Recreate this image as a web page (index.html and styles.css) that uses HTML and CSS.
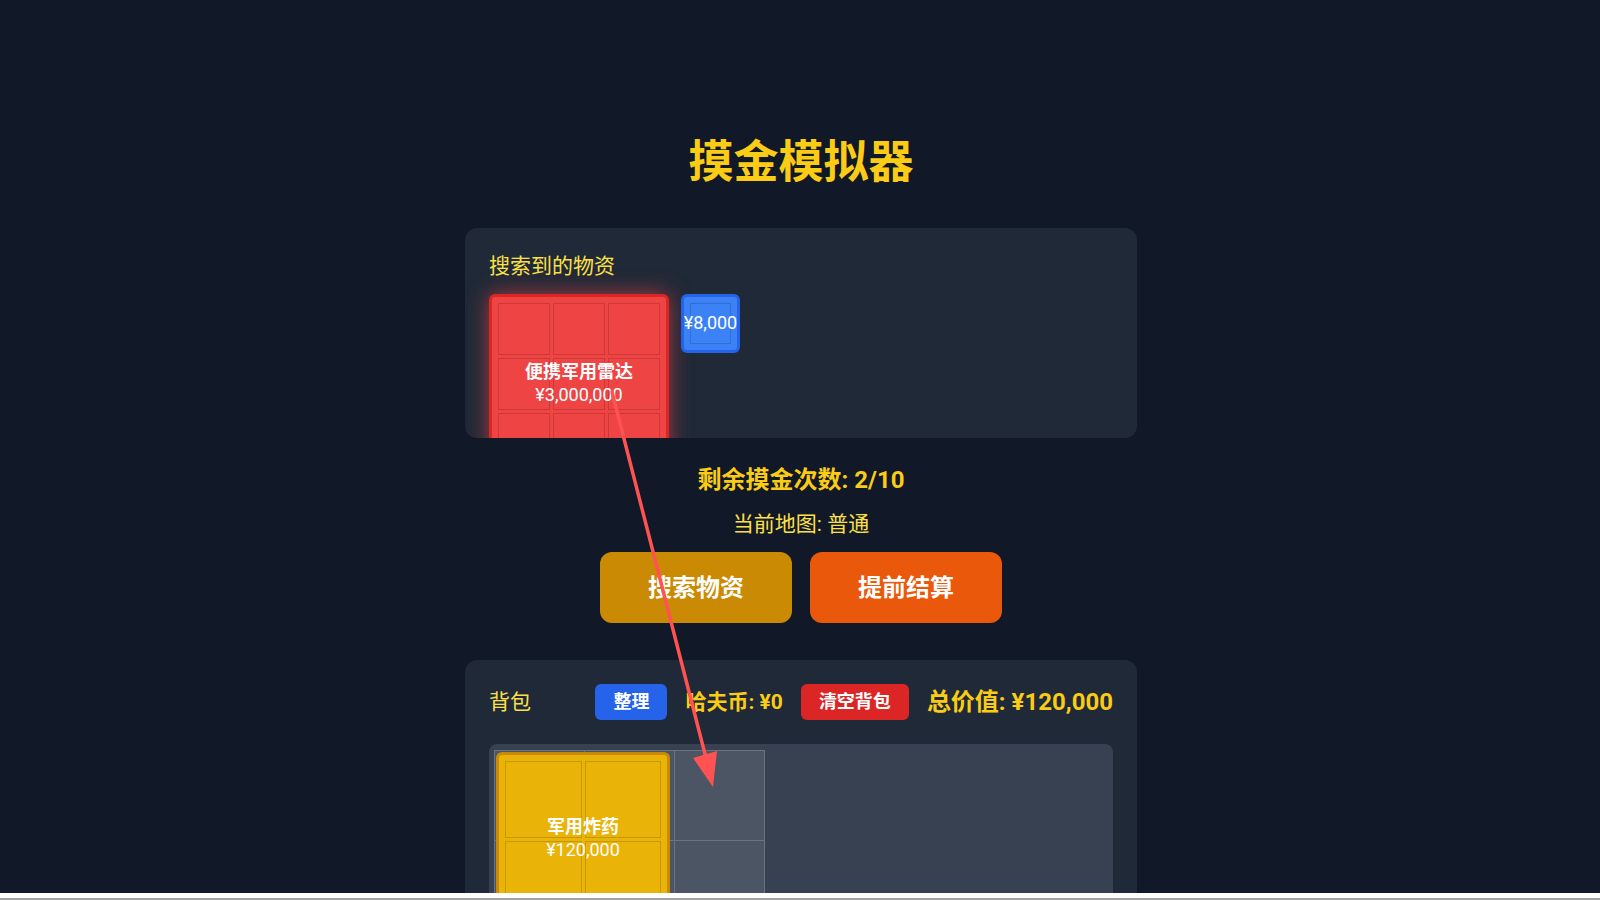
FILE: index.html
```html
<!DOCTYPE html>
<html lang="zh-CN">
<head>
<meta charset="utf-8">
<title>摸金模拟器</title>
<link rel="stylesheet" href="styles.css">
</head>
<body>
<main class="page">
  <h1 class="title">摸金模拟器</h1>

  <section class="panel search-panel">
    <h2 class="panel-label">搜索到的物资</h2>
    <div class="found-items">
      <div class="item item-red glow" style="width:180px;height:180px">
        <div class="cells cols-3">
          <span class="cell"></span><span class="cell"></span><span class="cell"></span>
          <span class="cell"></span><span class="cell"></span><span class="cell"></span>
          <span class="cell"></span><span class="cell"></span><span class="cell"></span>
        </div>
        <div class="item-info">
          <div class="item-name">便携军用雷达</div>
          <div class="item-price">¥3,000,000</div>
        </div>
      </div>
      <div class="item item-blue" style="width:59px;height:59px">
        <div class="cells cols-1">
          <span class="cell"></span>
        </div>
        <div class="item-info">
          <div class="item-price">¥8,000</div>
        </div>
      </div>
    </div>
  </section>

  <p class="counter">剩余摸金次数: 2/10</p>
  <p class="map">当前地图: 普通</p>

  <div class="actions">
    <button class="btn btn-search">搜索物资</button>
    <button class="btn btn-settle">提前结算</button>
  </div>

  <section class="panel bag-panel">
    <div class="bag-header">
      <h2 class="panel-label">背包</h2>
      <div class="bag-tools">
        <button class="chip chip-blue">整理</button>
        <span class="coins">哈夫币: ¥0</span>
        <button class="chip chip-red">清空背包</button>
        <span class="total">总价值: ¥120,000</span>
      </div>
    </div>
    <div class="bag-area">
      <div class="bag-grid">
        <span class="bag-cell"></span><span class="bag-cell"></span><span class="bag-cell"></span>
        <span class="bag-cell"></span><span class="bag-cell"></span><span class="bag-cell"></span>
        <span class="bag-cell"></span><span class="bag-cell"></span><span class="bag-cell"></span>
        <span class="bag-cell"></span><span class="bag-cell"></span><span class="bag-cell"></span>
        <div class="item item-yellow bag-item" style="left:2px;top:2px;width:174px;height:174px">
          <div class="cells cols-2">
            <span class="cell"></span><span class="cell"></span>
            <span class="cell"></span><span class="cell"></span>
          </div>
          <div class="item-info">
            <div class="item-name">军用炸药</div>
            <div class="item-price">¥120,000</div>
          </div>
        </div>
      </div>
    </div>
  </section>
</main>

<svg class="annotation" viewBox="0 0 1600 900" xmlns="http://www.w3.org/2000/svg">
  <line x1="612" y1="392" x2="706" y2="758" stroke="#ff5252" stroke-width="3.5" stroke-linecap="round"/>
  <polygon points="693,758 717,751 713,787" fill="#ff5252"/>
</svg>
<div class="window-edge"></div>
</body>
</html>
```

FILE: styles.css
```css
* {
  box-sizing: border-box;
}

html {
  overflow: hidden;
}

body {
  margin: 0;
  padding-left: 2px;
  min-height: 900px;
  background: #111827;
  color: #fff;
  font-family: Roboto, "Noto Sans CJK SC", sans-serif;
}

.page {
  width: 672px;
  margin: 0 auto;
  padding-top: 136px;
}

.title {
  margin: 0 0 38px;
  font-size: 45px;
  line-height: 54px;
  font-weight: 700;
  color: #facc15;
  text-align: center;
}

.panel {
  background: #1f2937;
  border-radius: 12px;
}

.search-panel {
  height: 210px;
  overflow: hidden;
  padding: 24px;
}

.panel-label {
  margin: 0;
  font-size: 21px;
  line-height: 28px;
  font-weight: 400;
  color: #fde047;
}

.search-panel .panel-label {
  margin-bottom: 14px;
}

.found-items {
  display: flex;
  align-items: flex-start;
  gap: 12px;
}

.item {
  position: relative;
  flex: none;
  border: 3px solid;
  border-radius: 6px;
  padding: 6px;
}

.cells {
  display: grid;
  gap: 3px;
  height: 100%;
  grid-auto-rows: 1fr;
}

.cols-1 { grid-template-columns: 1fr; }
.cols-2 { grid-template-columns: repeat(2, 1fr); }
.cols-3 { grid-template-columns: repeat(3, 1fr); }

.cell {
  border: 1px solid rgba(0, 0, 0, 0.15);
}

.item-info {
  position: absolute;
  inset: 0;
  padding-bottom: 3px;
  display: flex;
  flex-direction: column;
  align-items: center;
  justify-content: center;
  font-size: 18px;
  line-height: 23px;
  color: #fff;
  text-align: center;
  white-space: nowrap;
}

.item-name {
  font-weight: 700;
}

.item-red {
  background: #ef4444;
  border-color: #dc2626;
}

.glow {
  box-shadow: 0 0 22px rgba(239, 68, 68, 0.65);
}

.item-blue {
  background: #3b82f6;
  border-color: #2563eb;
}

.item-yellow {
  background: #eab308;
  border-color: #ca8a04;
}

.counter {
  margin: 26px 0 0;
  text-align: center;
  font-size: 24px;
  line-height: 32px;
  font-weight: 700;
  color: #facc15;
}

.map {
  margin: 14px 0 0;
  text-align: center;
  font-size: 21px;
  line-height: 28px;
  color: #fde047;
}

.actions {
  display: flex;
  justify-content: center;
  gap: 18px;
  margin-top: 14px;
}

.btn {
  width: 192px;
  height: 71px;
  border: 0;
  border-radius: 12px;
  font: 700 24px/1 Roboto, "Noto Sans CJK SC", sans-serif;
  color: #fff;
}

.btn-search {
  background: #ca8a04;
}

.btn-settle {
  background: #ea580c;
}

.bag-panel {
  margin-top: 37px;
  padding: 24px;
}

.bag-header {
  display: flex;
  align-items: center;
  justify-content: space-between;
  height: 36px;
}

.bag-tools {
  display: flex;
  align-items: center;
  gap: 18px;
}

.chip {
  height: 36px;
  padding: 0 18px;
  border: 0;
  border-radius: 6px;
  font: 700 18px/36px Roboto, "Noto Sans CJK SC", sans-serif;
  color: #fff;
}

.chip-blue {
  background: #2563eb;
}

.chip-red {
  background: #dc2626;
}

.coins {
  font-size: 21px;
  line-height: 28px;
  font-weight: 700;
  color: #facc15;
}

.total {
  font-size: 24px;
  line-height: 32px;
  font-weight: 700;
  color: #facc15;
}

.bag-area {
  margin-top: 24px;
  height: 400px;
  padding: 6px 6px 6px 5px;
  background: #374151;
  border-radius: 8px;
}

.bag-grid {
  position: relative;
  display: grid;
  grid-template-columns: repeat(3, 89px);
  grid-auto-rows: 89px;
  gap: 1px;
  padding: 1px;
  width: max-content;
  background: #6b7280;
}

.bag-cell {
  background: #4b5563;
}

.bag-item {
  position: absolute;
}

.annotation {
  position: absolute;
  top: 0;
  left: 0;
  width: 1600px;
  height: 900px;
  pointer-events: none;
}

.window-edge {
  position: fixed;
  left: 0;
  right: 0;
  bottom: 0;
  height: 7px;
  background: #fff;
  border-bottom: 2px solid #a3a3a3;
}
```
